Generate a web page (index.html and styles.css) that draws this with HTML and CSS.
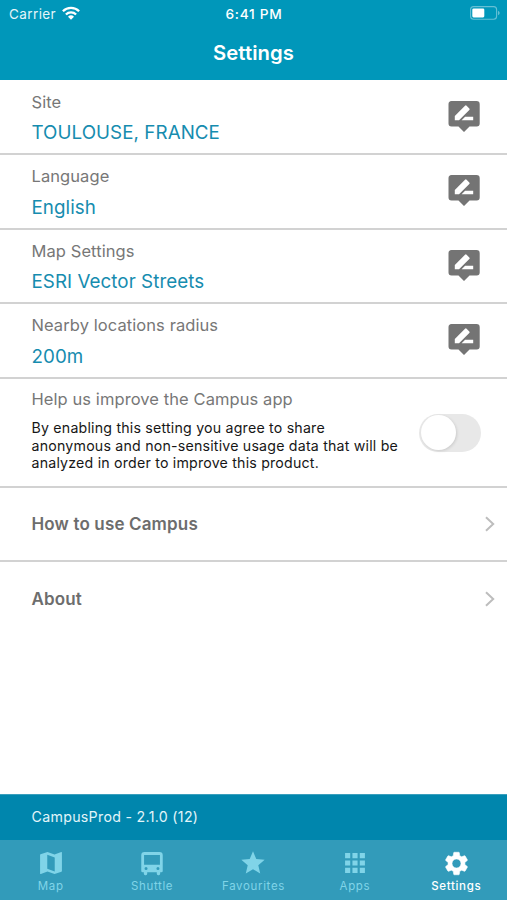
FILE: index.html
```html
<!DOCTYPE html>
<html lang="en">
<head>
<meta charset="utf-8">
<title>Settings</title>
<link rel="stylesheet" href="styles.css">
</head>
<body>
<svg class="defs" aria-hidden="true">
  <symbol id="edit" viewBox="0 0 32 31">
    <path fill="#747474" d="M3.500 0h25A3.200 3.200 0 0 1 31.700 3.200v19.300a3 3 0 0 1-3 3h-7.200L16 31l-5.500-5.500H3.500a3 3 0 0 1-3-3V3.200A3.200 3.200 0 0 1 3.500 0z"/>
    <path fill="#fff" d="M6.800 19.300v-4.400L17 4.700q.8-.8 1.600 0l2.700 2.700q.8.800 0 1.600L11 19.300zM13.600 19.300l3.500-3.500h8.100v3.500z"/>
  </symbol>
  <symbol id="chevron" viewBox="0 0 10 16"><path d="M1 1.200 8.200 8 1 14.800" fill="none" stroke="#bdbdbd" stroke-width="2"/></symbol>
</svg>
<div class="screen">
  <header class="header">
    <div class="status">
      <div class="carrier"><span>Carrier</span>
        <svg class="wifi" viewBox="0 0 18 14"><g fill="none" stroke="#fff" stroke-width="2.300"><path d="M.9 5.200a11.500 11.500 0 0 1 16.200 0"/><path d="M3.900 8.500a7.200 7.200 0 0 1 10.200 0"/></g><path fill="#fff" d="m9 13.800-3-3.100a4.300 4.300 0 0 1 6 0z"/></svg>
      </div>
      <span class="time">6:41 PM</span>
      <svg class="battery" viewBox="0 0 30 14"><rect x=".6" y=".6" width="26" height="12.600" rx="3" fill="none" stroke="#fff" stroke-opacity=".4" stroke-width="1.100"/><rect x="2.300" y="2.400" width="12" height="9" rx="1.300" fill="#fff"/><path d="M28 4.700q1.700.7 1.700 2.300T28 9.300z" fill="#fff" fill-opacity=".4"/></svg>
    </div>
    <h1 class="title">Settings</h1>
  </header>
  <main class="list">
    <div class="row first"><div><div class="label">Site</div><div class="value">TOULOUSE, FRANCE</div></div><svg class="edit"><use href="#edit"/></svg></div>
    <div class="row"><div><div class="label">Language</div><div class="value">English</div></div><svg class="edit"><use href="#edit"/></svg></div>
    <div class="row"><div><div class="label">Map Settings</div><div class="value">ESRI Vector Streets</div></div><svg class="edit"><use href="#edit"/></svg></div>
    <div class="row"><div><div class="label">Nearby locations radius</div><div class="value">200m</div></div><svg class="edit"><use href="#edit"/></svg></div>
    <div class="row consent">
      <div><div class="label">Help us improve the Campus app</div>
      <p class="note">By enabling this setting you agree to share<br>anonymous and non-sensitive usage data that will be<br>analyzed in order to improve this product.</p></div>
      <div class="toggle"><div class="knob"></div></div>
    </div>
    <div class="row link"><span>How to use Campus</span><svg class="chevron"><use href="#chevron"/></svg></div>
    <div class="row link last"><span>About</span><svg class="chevron"><use href="#chevron"/></svg></div>
  </main>
  <footer class="version">CampusProd - 2.1.0 (12)</footer>
  <nav class="tabs">
    <div class="tab"><svg viewBox="0 0 24 24"><path d="m21 2.500-.16.030L15 4.800 9 2.500 3 4.600c-.21.070-.36.250-.36.480V21c0 .28.220.5.500.5l.16-.030L9 19.200l6 2.300 6-2.100c.21-.070.360-.25.360-.48V3c0-.28-.22-.5-.36-.5zM15.200 19.200l-6.400-2.300V4.900l6.400 2.300z"/></svg><span>Map</span></div>
    <div class="tab"><svg viewBox="0 0 24 24"><path fill-rule="evenodd" d="M5.500 2.500h13a2.700 2.700 0 0 1 2.700 2.700v13.600a1.200 1.200 0 0 1-1.200 1.200h-1v1.300a1.200 1.200 0 0 1-1.200 1.200h-.5a1.200 1.200 0 0 1-1.200-1.200V20H7.900v1.300a1.200 1.200 0 0 1-1.200 1.200h-.5A1.200 1.200 0 0 1 5 21.300V20H4a1.200 1.200 0 0 1-1.200-1.200V5.200a2.700 2.700 0 0 1 2.700-2.700zM5.200 5.200v8.400h13.600V5.200zM6.900 15.400a1.300 1.300 0 1 0 0 2.600 1.300 1.300 0 0 0 0-2.600zM17.100 15.400a1.300 1.300 0 1 0 0 2.600 1.300 1.300 0 0 0 0-2.600z"/></svg><span>Shuttle</span></div>
    <div class="tab"><svg viewBox="0 0 24 24"><path d="M12 17.270 18.180 21l-1.640-7.030L22 9.240l-7.190-.61L12 2 9.190 8.630 2 9.240l5.460 4.730L5.820 21z"/></svg><span>Favourites</span></div>
    <div class="tab"><svg viewBox="0 0 24 24"><path d="M3.500 3.500h4.400v4.400H3.500zM9.800 3.500h4.400v4.400H9.800zM16.100 3.500h4.400v4.400h-4.400zM3.500 9.800h4.400v4.400H3.500zM9.800 9.800h4.400v4.400H9.800zM16.100 9.800h4.400v4.400h-4.400zM3.500 16.100h4.400v4.400H3.500zM9.800 16.100h4.400v4.400H9.800zM16.100 16.100h4.400v4.400h-4.400z"/></svg><span>Apps</span></div>
    <div class="tab active"><svg viewBox="0 0 24 24"><path stroke="#fff" stroke-width=".5" d="M19.430 12.980c.04-.32.070-.64.070-.98s-.03-.66-.07-.98l2.110-1.650c.19-.15.240-.42.120-.64l-2-3.460c-.12-.22-.39-.3-.61-.22l-2.490 1c-.52-.4-1.080-.73-1.690-.98l-.38-2.650C14.460 2.180 14.250 2 14 2h-4c-.25 0-.46.180-.49.420l-.38 2.650c-.61.250-1.170.590-1.690.98l-2.490-1c-.23-.09-.49 0-.61.220l-2 3.460c-.13.220-.07.490.12.640l2.110 1.650c-.04.320-.07.650-.07.980s.03.660.07.980l-2.110 1.650c-.19.150-.24.420-.12.640l2 3.460c.12.220.39.300.61.220l2.490-1c.52.400 1.080.730 1.690.98l.38 2.650c.03.240.24.420.49.420h4c.25 0 .46-.18.490-.42l.38-2.650c.61-.25 1.170-.59 1.690-.98l2.490 1c.23.090.49 0 .61-.22l2-3.460c.12-.22.070-.49-.12-.64l-2.110-1.650zM12 16c-2.200 0-4-1.800-4-4s1.800-4 4-4 4 1.800 4 4-1.800 4-4 4z"/></svg><span>Settings</span></div>
  </nav>
</div>
</body>
</html>
```
FILE: styles.css
```css
* { box-sizing: border-box; }
body { margin: 0; font-family: Inter, "Liberation Sans", sans-serif; background: #fff; }
.defs { position: absolute; width: 0; height: 0; }
.screen { width: 507px; height: 900px; display: flex; flex-direction: column; overflow: hidden; }
.header { height: 79.500px; flex: none; background: #0097ba; color: #fff; }
.status { height: 28px; display: grid; grid-template-columns: 1fr auto 1fr; align-items: center; padding: 0 7px 1px 9px; font-size: 13.500px; }
.carrier { display: flex; align-items: center; gap: 6px; letter-spacing: .4px; color: #e4f5f9; }
.wifi { width: 18px; height: 14px; margin-bottom: 2px; }
.time { font-weight: 500; font-size: 13.700px; letter-spacing: .7px; margin-right: 1px; }
.battery { width: 30px; height: 14px; justify-self: end; margin-bottom: 1px; }
.title { margin: 0; font-size: 20.300px; line-height: 49px; letter-spacing: .1px; font-weight: 600; text-align: center; }
.list { flex: 1; }
.row { height: 74.600px; border-bottom: 2px solid #d2d2d2; padding: 0 27px 0 31.500px; display: flex; justify-content: space-between; }
.first { height: 75.500px; }
.label { margin-top: 11px; font-size: 16.500px; line-height: 20px; letter-spacing: .08px; color: #777; white-space: nowrap; }
.first .label { margin-top: 12.200px; }
.value { margin-top: 10.800px; font-size: 18.800px; line-height: 22px; letter-spacing: .05px; color: #168caf; white-space: nowrap; }
.edit { width: 32px; height: 31px; margin-top: 20.200px; flex: none; }
.first .edit { margin-top: 21.200px; }
.consent { height: 108.900px; padding-right: 26px; }
.consent .label { margin-top: 9.800px; }
.note { margin: 10.500px 0 0; font-size: 14.200px; line-height: 17.500px; letter-spacing: .2px; color: #171717; white-space: nowrap; }
.toggle { width: 62px; height: 38px; flex: none; margin-top: 35px; border-radius: 19px; background: #e8e8e8; padding: 1.500px; }
.knob { width: 35px; height: 35px; border-radius: 50%; background: #fff; box-shadow: 1px 1px 3px rgba(0,0,0,.12); }
.link { align-items: center; padding-right: 12px; font-weight: 600; font-size: 17px; letter-spacing: .15px; color: #6d6d6d; }
.last { border-bottom: 0; height: 73.500px; }
.chevron { width: 10px; height: 16px; }
.version { height: 46.500px; flex: none; background: #0086ad; border-top: 1px solid #3a9fbd; color: #e2f5fa; font-size: 14.200px; letter-spacing: .3px; line-height: 44px; padding-left: 31.500px; }
.tabs { height: 60px; flex: none; background: #329bba; display: grid; grid-template-columns: repeat(5, 1fr); color: #80d4e8; }
.tab { display: flex; flex-direction: column; align-items: center; padding-top: 9px; font-size: 11.500px; line-height: 14px; font-weight: 400; letter-spacing: .65px; }
.tab svg { width: 28px; height: 28px; fill: currentColor; margin-bottom: 2px; }
.active { color: #fff; font-weight: 500; }
.active svg { width: 27px; height: 27px; margin: .5px 0 2.500px; }
```
